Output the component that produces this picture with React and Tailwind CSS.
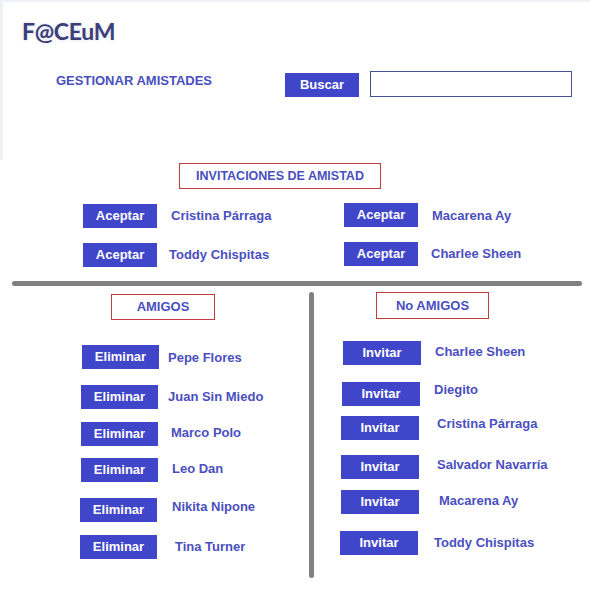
import React from "react";

const BTN = "bg-[#3f46c9] text-white font-bold text-[13px] leading-[16px] flex items-center justify-center shrink-0";
const NAME = "text-[#4a4fbf] font-bold text-[13px] leading-[16px] whitespace-nowrap";

const amigos = [
  { name: "Pepe Flores", row: "mt-[25px] ml-[82px]", gap: "ml-[9px] mt-[5px]" },
  { name: "Juan Sin Miedo", row: "mt-[16px] ml-[81px]", gap: "ml-[10px] mt-[4px]" },
  { name: "Marco Polo", row: "mt-[13px] ml-[81px]", gap: "ml-[13px] mt-[3px]" },
  { name: "Leo Dan", row: "mt-[12px] ml-[81px]", gap: "ml-[14px] mt-[3px]" },
  { name: "Nikita Nipone", row: "mt-[16px] ml-[80px]", gap: "ml-[15px] mt-[1px]" },
  { name: "Tina Turner", row: "mt-[13px] ml-[80px]", gap: "ml-[18px] mt-[4px]" },
];

const noAmigos = [
  { name: "Charlee Sheen", row: "mt-[22px] ml-[29px]", gap: "ml-[14px] mt-[3px]" },
  { name: "Diegito", row: "mt-[17px] ml-[28px]", gap: "ml-[14px] mt-[0px]" },
  { name: "Cristina Párraga", row: "mt-[10px] ml-[27px]", gap: "ml-[18px] mt-[0px]" },
  { name: "Salvador Navarría", row: "mt-[15px] ml-[27px]", gap: "ml-[18px] mt-[2px]" },
  { name: "Macarena Ay", row: "mt-[11px] ml-[27px]", gap: "ml-[20px] mt-[3px]" },
  { name: "Toddy Chispitas", row: "mt-[17px] ml-[26px]", gap: "ml-[16px] mt-[4px]" },
];

function Row({ label, btnW, name, row, gap }) {
  return (
    <div className={"flex items-start " + row}>
      <div className={BTN + " h-[24px] " + btnW}>{label}</div>
      <div className={NAME + " " + gap}>{name}</div>
    </div>
  );
}

function TitleBox({ children, cls }) {
  return (
    <div className={"border border-[#c23b3f] flex items-center justify-center text-[#4a4fbf] font-bold leading-[16px] " + cls}>
      {children}
    </div>
  );
}

export default function App() {
  return (
    <div
      className="w-[616px] h-[606px] bg-white overflow-hidden"
      style={{ fontFamily: '"Liberation Sans", Arial, sans-serif' }}
    >
      {/* Header */}
      <div className="h-[160px] w-[590px] border-t-2 border-l-[3px] border-[#eef1f5]">
        <div
          className="pl-[19px] pt-[17px] h-[41px] text-[23px] leading-[24px] font-bold text-[#3b3f78] tracking-[-0.3px] [text-shadow:0_0_3px_rgba(140,150,210,0.35)]"
          style={{ fontFamily: 'Lato, "Open Sans", sans-serif' }}
        >
          F@CEuM
        </div>
        <div className="mt-[28px] flex items-start h-[26px]">
          <div className="w-[282px] shrink-0 pl-[53px] mt-[2px] text-[13px] leading-[16px] font-bold text-[#4a4fbf] whitespace-nowrap">
            GESTIONAR AMISTADES
          </div>
          <div className={BTN + " w-[74px] h-[24px] mt-[2px]"}>Buscar</div>
          <div className="ml-[11px] shrink-0 w-[202px] h-[26px] border border-[#4a4f99] bg-white" />
        </div>
      </div>

      {/* Invitaciones */}
      <TitleBox cls="mt-[3px] ml-[179px] w-[202px] h-[26px] text-[12.5px]">INVITACIONES DE AMISTAD</TitleBox>
      <div className="h-[92px] flex">
        <div className="w-[344px] shrink-0 flex flex-col">
          <Row label="Aceptar" btnW="w-[74px]" name="Cristina Párraga" row="mt-[15px] ml-[83px]" gap="ml-[14px] mt-[4px]" />
          <Row label="Aceptar" btnW="w-[74px]" name="Toddy Chispitas" row="mt-[15px] ml-[83px]" gap="ml-[12px] mt-[4px]" />
        </div>
        <div className="flex flex-col">
          <Row label="Aceptar" btnW="w-[74px]" name="Macarena Ay" row="mt-[14px] ml-[0px]" gap="ml-[14px] mt-[5px]" />
          <Row label="Aceptar" btnW="w-[74px]" name="Charlee Sheen" row="mt-[15px] ml-[0px]" gap="ml-[13px] mt-[4px]" />
        </div>
      </div>

      {/* Separator */}
      <div className="ml-[12px] w-[570px] h-[5px] rounded-full bg-[#808080]" />

      {/* Amigos / No amigos */}
      <div className="flex">
        <div className="w-[309px] shrink-0 flex flex-col">
          <TitleBox cls="mt-[8px] ml-[111px] w-[104px] h-[26px] text-[13px]">AMIGOS</TitleBox>
          {amigos.map((a) => (
            <Row key={a.name} label="Eliminar" btnW="w-[77px]" name={a.name} row={a.row} gap={a.gap} />
          ))}
        </div>
        <div className="w-[5px] shrink-0 h-[286px] mt-[6px] rounded-sm bg-[#808080]" />
        <div className="flex flex-col">
          <TitleBox cls="mt-[6px] ml-[62px] w-[113px] h-[27px] text-[13px]">No AMIGOS</TitleBox>
          {noAmigos.map((a) => (
            <Row key={a.name} label="Invitar" btnW="w-[78px]" name={a.name} row={a.row} gap={a.gap} />
          ))}
        </div>
      </div>
    </div>
  );
}
